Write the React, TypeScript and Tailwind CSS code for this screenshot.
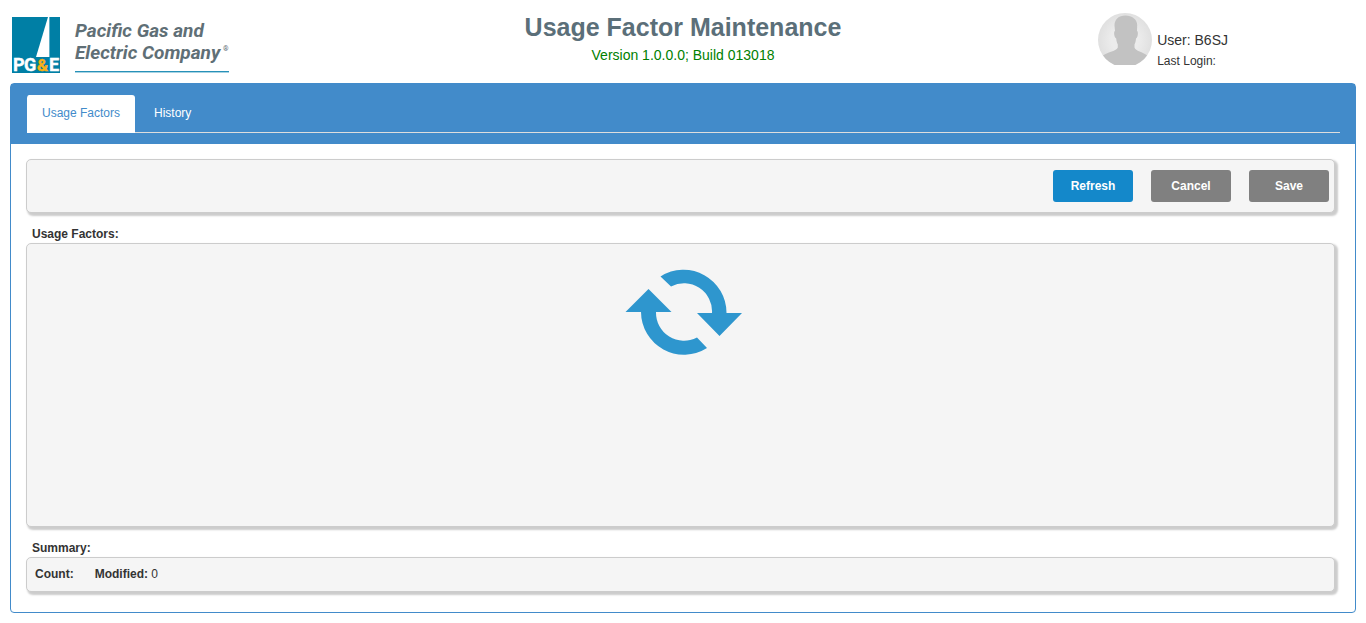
import { useState } from "react";
import type { ReactNode } from "react";

function CompanyLogo() {
  return (
    <svg viewBox="0 0 222 60" className="h-[60px] w-[222px]" role="img" aria-label="Pacific Gas and Electric Company">
      <rect x="0" y="2" width="48" height="56" fill="#007fa5" />
      <path d="M24 42L36 2H37.4V42Z" fill="#fff" />
      <g fontFamily="Roboto, 'Liberation Sans', sans-serif" fontWeight="700">
        <g fontSize="18" fill="#fff" stroke="#fff" strokeWidth="0.4">
          <text x="1" y="56">P</text>
          <text x="12" y="56">G</text>
          <text x="37" y="56">E</text>
        </g>
        <text x="25" y="56" fontSize="17" fill="#fbb116" stroke="#fbb116" strokeWidth="0.4">&amp;</text>
        <g fontSize="19" fontStyle="italic" fill="#5f6f76">
          <text x="63" y="22">Pacific Gas and</text>
          <text x="63" y="44">Electric Company</text>
        </g>
        <text x="211" y="36" fontSize="7" fill="#5f6f76">®</text>
      </g>
      <rect x="63" y="56" width="154" height="1.4" fill="#2791b8" />
    </svg>
  );
}

function Avatar() {
  return (
    <svg viewBox="0 0 54 54" className="h-[54px] w-[54px]" aria-hidden="true">
      <defs>
        <radialGradient id="avatar-bg">
          <stop offset="0.5" stopColor="#ececec" />
          <stop offset="1" stopColor="#e0e0e0" />
        </radialGradient>
        <clipPath id="avatar-clip">
          <path d="M0 0H54V52H0Z" />
        </clipPath>
        <clipPath id="avatar-circle">
          <circle cx="27" cy="27" r="27" />
        </clipPath>
      </defs>
      <g clipPath="url(#avatar-clip)">
        <g clipPath="url(#avatar-circle)">
          <rect width="54" height="54" fill="url(#avatar-bg)" />
          <path
            d="M27.500 2.500C20.500 2.500 16.500 6.500 16.500 12.500L17 18C15.500 18.500 16 24.500 18.200 25.500C18.500 28.500 19 30 19.800 31.500V34.500C18.500 38 10 39 5 42.500L0 54H54L49 42.500C45 39 37.500 38 36.500 34.500V31.500C37.300 30 37.800 28 38 25.500C40 24.500 40.500 18.500 39 18L39.200 12C39.200 6.500 34 2.500 27.500 2.500Z"
            fill="#c2c2c2"
          />
        </g>
      </g>
    </svg>
  );
}

function LoadingArrows() {
  return (
    <svg viewBox="0 0 118 88" className="h-[88px] w-[118px]" role="img" aria-label="Loading">
      <g fill="#2e96ce">
        <path d="M35.500 8.500A43 43 0 0 1 101.500 45H117L94.500 68L72 45H87A28 28 0 0 0 46 18.500Z" />
        <path d="M0.500 44L23.500 21L46.500 44H31A28 28 0 0 0 72 69.500L82 80A43 43 0 0 1 16 44Z" />
      </g>
    </svg>
  );
}

function Panel({ className, children }: { className: string; children?: ReactNode }) {
  return (
    <div className={`rounded-[5px] border border-[#ccc] bg-[#f5f5f5] shadow-[2px_2px_2px_1px_#ccc] ${className}`}>
      {children}
    </div>
  );
}

const buttonBase = "h-8 w-20 rounded-[3px] text-xs font-bold text-white";
const tabs = ["Usage Factors", "History"];

export default function App() {
  const [active, setActive] = useState(tabs[0]);
  return (
    <div className="bg-white px-[10px] pb-[10px] font-['Liberation_Sans',Arial,sans-serif] text-xs text-[#333]">
      <header className="grid h-[83px] grid-cols-[1fr_auto_1fr] items-start">
        <div className="pt-[15px] pl-[2px]">
          <CompanyLogo />
        </div>
        <div className="pt-3 text-center">
          <h1 className="text-[25px] leading-[30px] font-bold text-[#5b6f79]">Usage Factor Maintenance</h1>
          <p className="pt-1 text-sm leading-[18px] text-[#008000]">Version 1.0.0.0; Build 013018</p>
        </div>
        <div className="flex justify-end gap-[5px] pt-[13px] pr-[128px]">
          <Avatar />
          <div className="pt-[17px]">
            <p className="text-sm leading-5">User: B6SJ</p>
            <p className="leading-[22px]">Last Login:</p>
          </div>
        </div>
      </header>

      <main className="rounded-[4px] border border-[#428bca]">
        <nav className="bg-[#428bca] px-[15px] pt-[11px] pb-[11px]">
          <div role="tablist" className="flex gap-1 border-b border-[#ddd]">
            {tabs.map((tab) => (
              <button
                key={tab}
                type="button"
                role="tab"
                aria-selected={active === tab}
                onClick={() => setActive(tab)}
                className={
                  active === tab
                    ? "-mb-px h-[38px] rounded-t-[3px] border-l border-[#428bca] bg-white bg-clip-padding px-[15px] pb-[2px] text-[#428bca]"
                    : "h-[37px] px-[15px] pb-[2px] text-white"
                }
              >
                {tab}
              </button>
            ))}
          </div>
        </nav>

        <div className="pt-[15px] pr-5 pb-5 pl-[15px]">
          <Panel className="flex justify-end gap-[18px] py-[10px] pr-[5px]">
            <button type="button" className={`${buttonBase} bg-[#1488ca]`}>Refresh</button>
            <button type="button" className={`${buttonBase} bg-[#808080]`}>Cancel</button>
            <button type="button" className={`${buttonBase} bg-[#808080]`}>Save</button>
          </Panel>

          <h2 className="px-[6px] pt-[13px] pb-px leading-4 font-bold">Usage Factors:</h2>
          <Panel className="flex min-h-[284px] justify-center pt-6 pl-[7px]">
            <LoadingArrows />
          </Panel>

          <h2 className="px-[6px] pt-[13px] pb-px leading-4 font-bold">Summary:</h2>
          <Panel className="flex gap-[21px] px-2 pt-[7px] pb-2 leading-[18px]">
            <p className="font-bold">Count:</p>
            <p>
              <span className="font-bold">Modified:</span> 0
            </p>
          </Panel>
        </div>
      </main>
    </div>
  );
}
